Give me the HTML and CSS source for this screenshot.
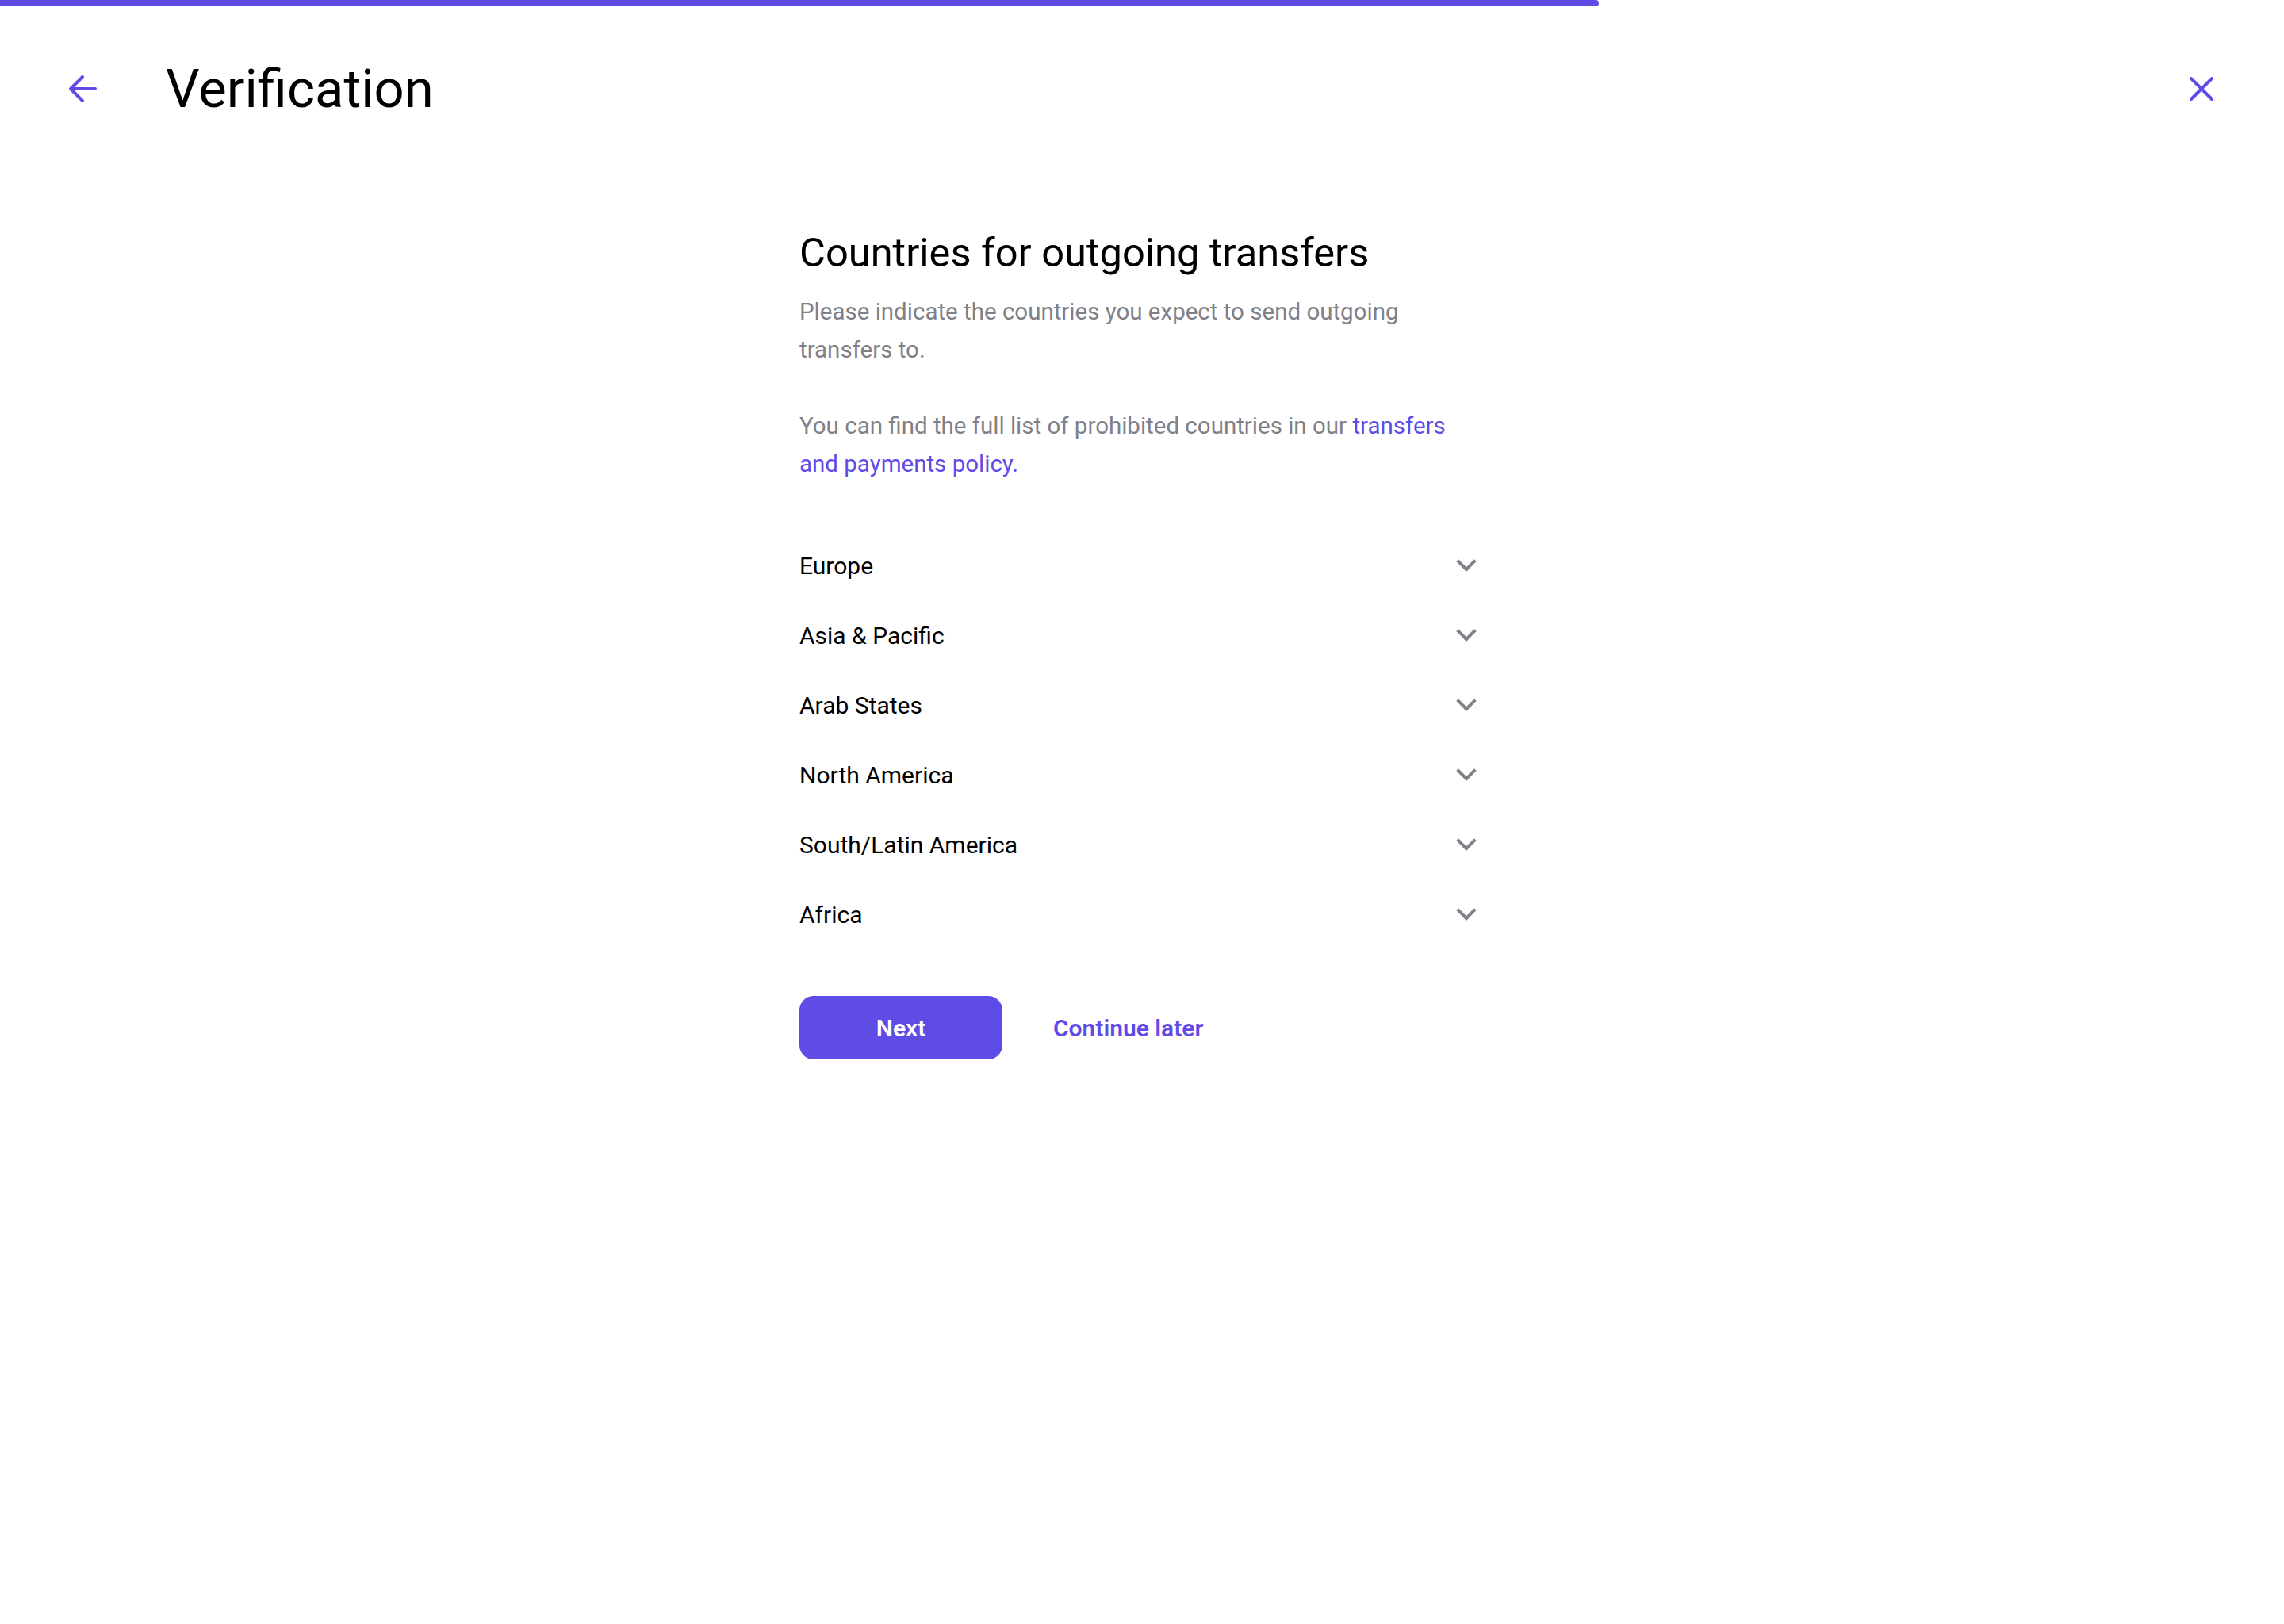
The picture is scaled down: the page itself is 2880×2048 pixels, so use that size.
FILE: index.html
```html
<!DOCTYPE html>
<html lang="en">
<head>
  <meta charset="UTF-8" />
  <meta name="viewport" content="width=device-width, initial-scale=1.0"/>
  <title>Verification</title>
  <link rel="stylesheet" href="styles.css">
</head>
<body>

<!-- Progression -->
<div class="progress">
  <div class="progress-bar" style="width: 70%;"></div>
</div>

<!-- En-tête -->
<div class="header">
  <button class="icon-btn" aria-label="Back">
    <svg width="48" height="48" viewBox="0 0 48 48" fill="none" stroke="currentColor" stroke-width="4" stroke-linecap="round" stroke-linejoin="round">
      <path d="M40 24H9M24 9L9 24L24 39"/>
    </svg>
  </button>
  <h1 class="title">Verification</h1>
  <button class="icon-btn close-btn" aria-label="Close">
    <svg width="48" height="48" viewBox="0 0 48 48" fill="none" stroke="currentColor" stroke-width="4" stroke-linecap="round">
      <path d="M11 11L37 37M37 11L11 37"/>
    </svg>
  </button>
</div>

<!-- Contenu -->
<div class="content">
  <h2>Countries for outgoing transfers</h2>
  <p class="hint">Please indicate the countries you expect to send outgoing transfers to.</p>
  <p class="hint">You can find the full list of prohibited countries in our <a href="#">transfers and payments policy.</a></p>

  <div class="regions">
    <div class="region"><span>Europe</span><span class="chevron"></span></div>
    <div class="region"><span>Asia &amp; Pacific</span><span class="chevron"></span></div>
    <div class="region"><span>Arab States</span><span class="chevron"></span></div>
    <div class="region"><span>North America</span><span class="chevron"></span></div>
    <div class="region"><span>South/Latin America</span><span class="chevron"></span></div>
    <div class="region"><span>Africa</span><span class="chevron"></span></div>
  </div>

  <div class="actions">
    <button class="next-btn">Next</button>
    <a href="#" class="later-link">Continue later</a>
  </div>
</div>

</body>
</html>
```

FILE: styles.css
```css
/* Base */
body {
  margin: 0;
  background: #ffffff;
  font-family: Roboto, "Noto Sans", sans-serif;
  color: #000;
}

.progress {
  height: 8px;
}

.progress-bar {
  height: 100%;
  background-color: #5f4ce6;
  border-radius: 0 4px 4px 0;
}

.header {
  display: flex;
  align-items: center;
  height: 144px;
  padding: 32px 80px 0 80px;
}

.icon-btn {
  width: 48px;
  height: 48px;
  padding: 0;
  border: none;
  background: none;
  color: #5f4ce6;
  cursor: pointer;
}

.icon-btn svg {
  display: block;
}

.title {
  margin: 0 0 0 81px;
  font-size: 67px;
  font-weight: 400;
  line-height: 80px;
}

.close-btn {
  margin-left: auto;
}

.content {
  width: 864px;
  margin: 103px auto 0;
}

h2 {
  margin: 0 0 18px;
  font-size: 50.6px;
  font-weight: 400;
  line-height: 64px;
}

.hint {
  margin: 0 0 48px;
  font-size: 29.5px;
  line-height: 48px;
  color: #808088;
}

.hint a {
  color: #5f4ce6;
  text-decoration: none;
}

.regions {
  margin-top: 60px;
}

.region {
  display: flex;
  align-items: center;
  justify-content: space-between;
  height: 88px;
  font-size: 30px;
  cursor: pointer;
}

.chevron {
  width: 14px;
  height: 14px;
  margin-right: 14px;
  margin-top: -10px;
  border-right: 4px solid #818187;
  border-bottom: 4px solid #818187;
  transform: rotate(45deg);
}

.actions {
  display: flex;
  align-items: center;
  gap: 64px;
  margin-top: 59px;
}

.next-btn {
  width: 256px;
  height: 80px;
  border: none;
  border-radius: 18px;
  background-color: #5f4ce6;
  color: white;
  font-family: inherit;
  font-size: 30px;
  font-weight: 600;
  cursor: pointer;
}

.later-link {
  color: #5f4ce6;
  font-size: 30px;
  font-weight: 600;
  text-decoration: none;
}
```
